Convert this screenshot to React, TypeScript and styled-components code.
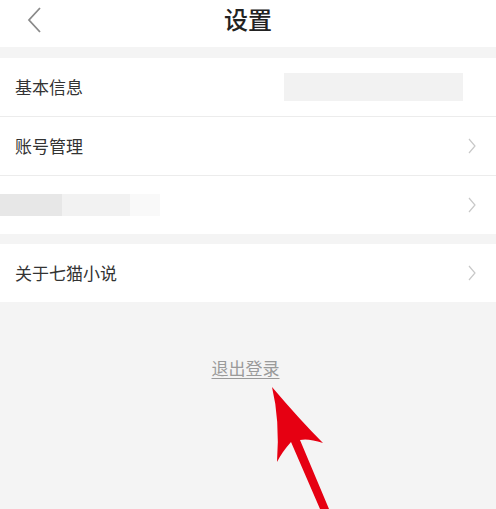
import React from "react";
import styled, { createGlobalStyle } from "styled-components";

const Global = createGlobalStyle`
  html, body { margin: 0; padding: 0; background: #f4f4f4; }
  body { font-family: "Noto Sans CJK SC", "Noto Sans", sans-serif; }
`;

const Page = styled.div`
  position: relative;
  width: 496px;
  height: 509px;
  overflow: hidden;
  background: #f4f4f4;
  display: flex;
  flex-direction: column;
`;

const Header = styled.header`
  height: 47px;
  background: #fff;
  display: flex;
  align-items: center;
  justify-content: center;
  position: relative;
`;

const BackButton = styled.button`
  position: absolute;
  left: 20px;
  top: 4px;
  width: 30px;
  height: 32px;
  border: 0;
  padding: 0;
  background: transparent;
  display: flex;
  align-items: center;
  justify-content: center;
`;

const Title = styled.h1`
  margin: 0;
  margin-top: -10px;
  font-size: 24px;
  font-weight: 500;
  color: #222;
  letter-spacing: 0;
`;

const Group = styled.section<{ $gap: number }>`
  margin-top: ${(p) => p.$gap}px;
  background: #fff;
  display: flex;
  flex-direction: column;
`;

const Row = styled.div<{ $divider?: boolean }>`
  height: 58px;
  display: flex;
  align-items: center;
  padding: 0 20px 0 15px;
  border-bottom: ${(p) => (p.$divider ? "1px solid #ececec" : "none")};
`;

const Label = styled.span`
  flex: 1;
  font-size: 17px;
  color: #333;
  margin-top: -2px;
`;

const Masked = styled.div`
  width: 179px;
  height: 28px;
  background: #f2f2f2;
  margin-right: 13px;
`;

const MaskedLabel = styled.div`
  flex: 1;
  display: flex;
  margin-left: -15px;
`;

const MaskSeg = styled.div<{ $w: number; $c: string }>`
  width: ${(p) => p.$w}px;
  height: 22px;
  background: ${(p) => p.$c};
`;

const Logout = styled.div`
  margin-top: 53px;
  align-self: center;
  margin-left: -5px;
  font-size: 17px;
  color: #9a9a9a;
  text-decoration: underline;
  text-underline-offset: 3px;
`;

const Arrow = styled.svg`
  position: absolute;
  left: 0;
  top: 0;
  pointer-events: none;
`;

const Chevron = () => (
  <svg width="8" height="16" viewBox="0 0 8 16">
    <path d="M1 1 L7 8 L1 15" fill="none" stroke="#c8c8c8" strokeWidth="1.2" />
  </svg>
);

export default function App() {
  return (
    <>
      <Global />
      <Page>
        <Header>
          <BackButton aria-label="返回">
            <svg width="16" height="28" viewBox="0 0 16 28">
              <path d="M13 2 L2 14 L13 26" fill="none" stroke="#8a8a8a" strokeWidth="1.8" />
            </svg>
          </BackButton>
          <Title>设置</Title>
        </Header>

        <Group $gap={11}>
          <Row $divider>
            <Label>基本信息</Label>
            <Masked />
          </Row>
          <Row $divider>
            <Label>账号管理</Label>
            <Chevron />
          </Row>
          <Row>
            <MaskedLabel>
              <MaskSeg $w={62} $c="#e7e7e7" />
              <MaskSeg $w={68} $c="#f2f2f2" />
              <MaskSeg $w={30} $c="#f9f9f9" />
            </MaskedLabel>
            <Chevron />
          </Row>
        </Group>

        <Group $gap={10}>
          <Row>
            <Label>关于七猫小说</Label>
            <Chevron />
          </Row>
        </Group>

        <Logout>退出登录</Logout>

        <Arrow width="496" height="509" viewBox="0 0 496 509">
          <path
            d="M272 387 Q300 420 323 443 Q308 438 300 440 L329 509 L320 509 L291 442 Q282 452 277 462 Q280 420 272 387 Z"
            fill="#e60012"
          />
        </Arrow>
      </Page>
    </>
  );
}
